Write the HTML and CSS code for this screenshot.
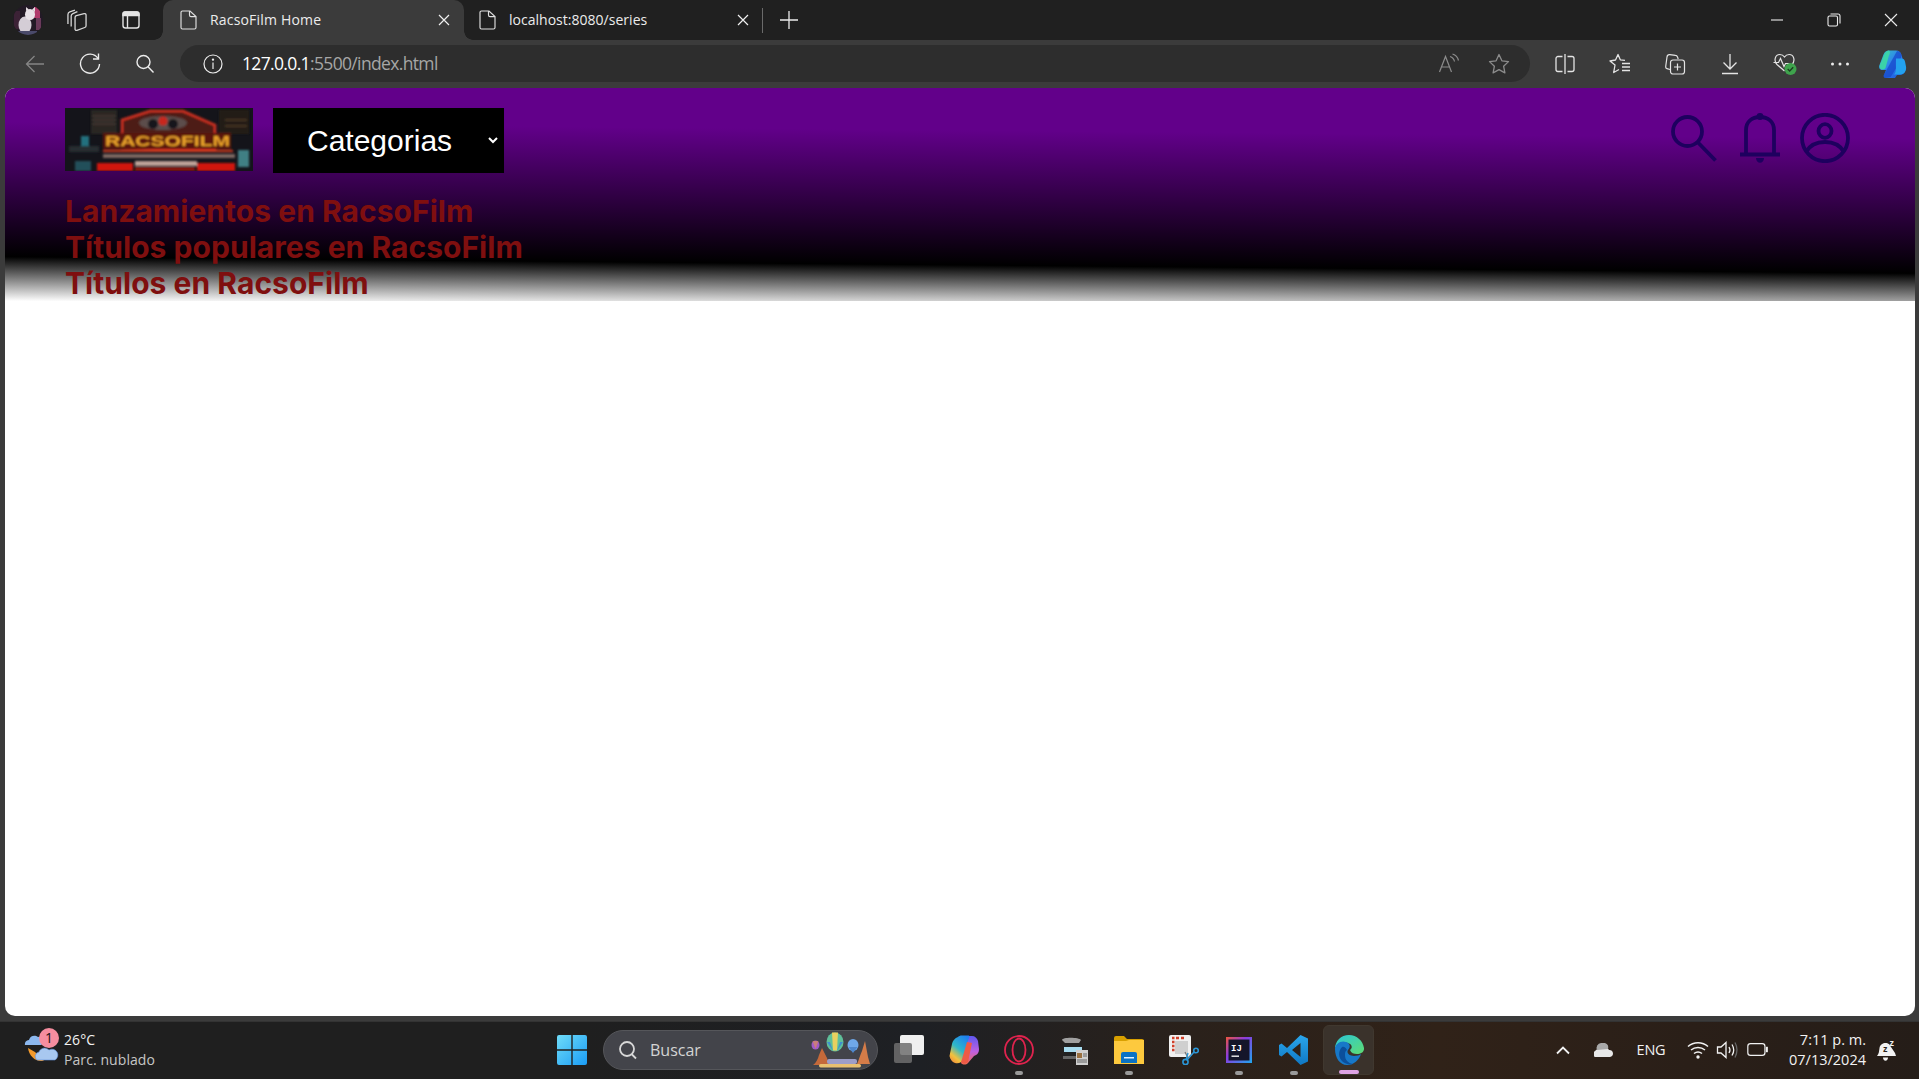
FILE: index.html
```html
<!DOCTYPE html>
<html lang="es">
<head>
<meta charset="utf-8">
<title>RacsoFilm Home</title>
<link rel="stylesheet" href="styles.css">
</head>
<body>
<svg class="defs" width="0" height="0" aria-hidden="true">
  <defs>
    <linearGradient id="gWin" x1="0" y1="0" x2="1" y2="1"><stop offset="0" stop-color="#6fdcf8"/><stop offset="1" stop-color="#1a9cf5"/></linearGradient>
    <linearGradient id="gCop" x1="0" y1="0" x2="1" y2="1"><stop offset="0" stop-color="#35c8c0"/><stop offset=".5" stop-color="#2d7df0"/><stop offset="1" stop-color="#1a4fd0"/></linearGradient>
    <linearGradient id="gCopL" x1=".8" y1="0" x2=".2" y2="1"><stop offset="0" stop-color="#1e7ff0"/><stop offset=".5" stop-color="#30b8c8"/><stop offset=".8" stop-color="#f2c23c"/><stop offset="1" stop-color="#f2903c"/></linearGradient>
    <linearGradient id="gCopR" x1="0" y1="0" x2="0" y2="1"><stop offset="0" stop-color="#5f58f0"/><stop offset=".55" stop-color="#c060e0"/><stop offset="1" stop-color="#f06a50"/></linearGradient>
    <linearGradient id="gEdge" x1="0" y1="0" x2="1" y2="1"><stop offset="0" stop-color="#2ac6d8"/><stop offset="1" stop-color="#5fdc72"/></linearGradient>
    <linearGradient id="gVs" x1="0" y1="0" x2="0" y2="1"><stop offset="0" stop-color="#2aa6ec"/><stop offset="1" stop-color="#0f78c4"/></linearGradient>
    <linearGradient id="gIj" x1="0" y1="0" x2="1" y2="1"><stop offset="0" stop-color="#f0563c"/><stop offset=".4" stop-color="#8a3ce0"/><stop offset="1" stop-color="#1ea8ee"/></linearGradient>
    <filter id="blurLogo" x="-5%" y="-5%" width="110%" height="110%"><feGaussianBlur stdDeviation="1.3"/></filter>
  </defs>
</svg>

<header class="tabstrip">
  <span class="strip-slot s56">
    <svg class="i30" viewBox="0 0 30 30"><defs><clipPath id="av"><circle cx="15" cy="15" r="15"/></clipPath></defs><g clip-path="url(#av)"><rect width="30" height="30" fill="#231a26"/><rect x="21" y="2" width="6" height="11" fill="#b03a6c"/><rect x="23" y="13" width="5" height="12" fill="#6a3a5a"/><rect x="1" y="6" width="6" height="18" fill="#3c2236"/><ellipse cx="12" cy="20" rx="6.500" ry="8.500" fill="#d4cdd6"/><ellipse cx="17" cy="9.500" rx="5" ry="5.500" fill="#e8e2e8"/><path d="M13 6l0-4 3 2.500zM19 4.500l3-2.500 0 5z" fill="#e6dde2"/><rect x="4" y="26" width="20" height="4" fill="#4a4a6a"/></g></svg>
  </span>
  <span class="strip-slot s42">
    <svg class="i22" viewBox="2.500 2 16 17" fill="none" stroke="#d6d6d6" stroke-width="1"><path d="M3.500 13.500V6.200c0-1 .5-1.600 1.400-1.900l4-1.400"/><path d="M6 15.500V7.500c0-1 .5-1.500 1.300-1.900l3.500-1.500"/><path d="M9 18V8.500c0-.7.400-1.100 1-1.300l6-1.600c.9-.2 1.500.3 1.500 1.100v8.200c0 .7-.4 1.200-1 1.400l-6 2.200c-.8.300-1.500-.2-1.500-1z"/></svg>
  </span>
  <span class="strip-slot s65">
    <svg class="i20" viewBox="0 0 20 20" fill="none" stroke="#e4e4e4" stroke-width="1.400"><rect x="2" y="2" width="16" height="16" rx="2.500"/><path d="M2 5.500h16V4a2 2 0 0 0-2-2H4a2 2 0 0 0-2 2z" fill="#e4e4e4"/><path d="M6.500 5.500V18"/></svg>
  </span>

  <div class="tab tab-active">
    <svg class="doc" viewBox="0 0 20 20" fill="none" stroke="#e0e0e0" stroke-width="1.150"><path d="M3 2.500C3 1.700 3.600 1 4.500 1h7.500L18 6.500v11c0 .8-.7 1.500-1.500 1.500h-12C3.600 19 3 18.300 3 17.500z"/><path d="M11.500 1v4c0 .9.700 1.600 1.500 1.600h5"/></svg>
    <span class="tab-label">RacsoFilm Home</span>
    <svg class="tab-x" viewBox="0 0 12 12" fill="none" stroke="#f0f0f0" stroke-width="1.200"><path d="M1 1l10 10M11 1L1 11"/></svg>
  </div>
  <div class="tab tab-idle">
    <svg class="doc" viewBox="0 0 20 20" fill="none" stroke="#e0e0e0" stroke-width="1.150"><path d="M3 2.500C3 1.700 3.600 1 4.500 1h7.500L18 6.500v11c0 .8-.7 1.500-1.500 1.500h-12C3.600 19 3 18.300 3 17.500z"/><path d="M11.500 1v4c0 .9.700 1.600 1.500 1.600h5"/></svg>
    <span class="tab-label">localhost:8080/series</span>
    <svg class="tab-x" viewBox="0 0 12 12" fill="none" stroke="#f0f0f0" stroke-width="1.200"><path d="M1 1l10 10M11 1L1 11"/></svg>
  </div>
  <span class="tab-divider"></span>
  <svg class="tab-plus" viewBox="0 0 18 18" fill="none" stroke="#ececec" stroke-width="1.300"><path d="M9 0v18M0 9h18"/></svg>

  <div class="winbtns">
    <span class="winbtn"><svg class="i14" viewBox="0 0 14 14" fill="none" stroke="#ececec" stroke-width="1.100"><path d="M1 7h12"/></svg></span>
    <span class="winbtn"><svg class="i14" viewBox="0 0 14 14" fill="none" stroke="#ececec" stroke-width="1.100"><rect x="1" y="3" width="9.500" height="10" rx="1.500"/><path d="M3.500 1H11a2 2 0 0 1 2 2v7.500"/></svg></span>
    <span class="winbtn"><svg class="i14" viewBox="0 0 14 14" fill="none" stroke="#ececec" stroke-width="1.100"><path d="M1 1l12 12M13 1L1 13"/></svg></span>
  </div>
</header>

<div class="toolbar">
  <span class="tool-slot">
    <svg class="i20" viewBox="0 0 20 20" fill="none" stroke="#858585" stroke-width="1.300"><path d="M19 10H1.500M9.500 2l-8 8 8 8"/></svg>
  </span>
  <span class="tool-slot">
    <svg class="i22" viewBox="0 0 22 22" fill="none" stroke="#ececec" stroke-width="1.400"><path d="M19 5.500A9.500 9.500 0 1 0 20.500 11"/><path d="M14 6h5.500V.5"/></svg>
  </span>
  <span class="tool-slot">
    <svg class="i20" viewBox="0 0 20 20" fill="none" stroke="#ececec" stroke-width="1.400"><circle cx="8.500" cy="8" r="6.500"/><path d="M13 12.700l5.500 5.800"/></svg>
  </span>
  <div class="address">
    <svg class="info" viewBox="0 0 20 20" fill="none" stroke="#ececec" stroke-width="1.200"><circle cx="10" cy="10" r="9"/><path d="M10 8.500V15"/><circle cx="10" cy="5.600" r=".6" fill="#ececec"/></svg>
    <span class="url"><span class="url-host">127.0.0.1</span><span class="url-rest">:5500/index.html</span></span>
    <div class="address-tools">
      <span class="addr-slot addr-read">
        <svg class="i22" viewBox="0 0 22 22" fill="none" stroke="#8c8c8c" stroke-width="1.200"><path d="M1.500 19L7.500 3.500 13.500 19M3.500 14h8"/><path d="M12 3.500c2.500.8 4 2.500 4.500 5M14.500 1c3.200 1 5.300 3.300 6 6.500"/></svg>
      </span>
      <span class="addr-slot">
        <svg class="i22" viewBox="0 0 22 22" fill="none" stroke="#8c8c8c" stroke-width="1.300" stroke-linejoin="round"><path d="M11 1.500l2.900 6.300 6.600.8-4.900 4.600 1.300 6.700L11 16.600l-5.900 3.300 1.300-6.700L1.500 8.600l6.600-.8z"/></svg>
      </span>
    </div>
  </div>
  <div class="toolbar-right">
    <span class="tool-slot">
      <svg class="i22" viewBox="0 0 22 22" fill="none" stroke="#e4e4e4" stroke-width="1.300"><path d="M8.500 3.500H4A2 2 0 0 0 2 5.500v11a2 2 0 0 0 2 2h4.500M13.500 3.500H18a2 2 0 0 1 2 2v11a2 2 0 0 1-2 2h-4.500M11 1v20"/></svg>
    </span>
    <span class="tool-slot">
      <svg class="i22" viewBox="0 0 22 22" fill="none" stroke="#e4e4e4" stroke-width="1.300" stroke-linejoin="round"><path d="M16 7.300L11.300 6.800 9 1.500 6.500 7 1 8l5 4-1.300 7.500L10 16.500"/><path d="M13 10.500h8M13 14h8M13 17.500h8"/></svg>
    </span>
    <span class="tool-slot">
      <svg class="i22" viewBox="0 0 22 22" fill="none" stroke="#e4e4e4" stroke-width="1.200"><path d="M6 16.500l-3-.8C2 15.300 1.500 14.500 1.700 13.500L3 4C3.200 2.500 4.300 1.500 5.800 1.700l5.700.7c1 .1 1.700.8 2 1.500L14.200 6"/><rect x="6.500" y="7" width="14" height="14" rx="2.500"/><path d="M13.500 10.500v7M10 14h7"/></svg>
    </span>
    <span class="tool-slot">
      <svg class="i22" viewBox="0 0 22 22" fill="none" stroke="#e4e4e4" stroke-width="1.300"><path d="M11 1v15M4.500 9.500l6.500 6.500 6.500-6.500M3 20.500h16"/></svg>
    </span>
    <span class="tool-slot">
      <svg class="i26" viewBox="0 0 26 26" fill="none" stroke="#e4e4e4" stroke-width="1.200"><path d="M12.500 20L5 13.500C1.500 10 3 3.500 7.800 3.500c2 0 3.700 1 4.700 2.500 1-1.500 2.700-2.500 4.700-2.500 4.800 0 6.300 6.500 2.800 10"/><path d="M1.500 11.500h5l2-4 3.500 8 1.500-3h4"/><circle cx="18.500" cy="18" r="6" fill="#3fa34d" stroke="none"/><path d="M15.700 18l2 2 3.500-3.700" stroke="#1c3c20" stroke-width="1.300"/></svg>
    </span>
    <span class="tool-slot">
      <svg class="i20" viewBox="0 0 20 20" fill="#ececec"><circle cx="2.500" cy="10" r="1.500"/><circle cx="10" cy="10" r="1.500"/><circle cx="17.500" cy="10" r="1.500"/></svg>
    </span>
    <span class="tool-slot tool-last">
      <svg class="i30" viewBox="0 0 30 30"><path d="M11 1.500h7c3 0 4.700 1.700 5.500 4.500L27 18c1.200 4-1 8-5 8h-3l-2 3H8c-2 0-2.500-1.500-2-3l2-5H4.500C2 21 .5 19 1.300 16.500l4.200-11C6.500 3 8.500 1.500 11 1.500z" fill="url(#gCop)"/><path d="M2 19C1 16 3 14 4.500 10 6 6 7.500 2 11 1.500c1.500 1 1 3-.2 5.500L7.500 19C6 21 3 21 2 19z" fill="#3bd2a8"/><path d="M19 2c2.500 0 4 2 4.700 4.500l-3 8.500-8 13-5 1c-2 0-2.800-1.500-2-3z" fill="#1646c8" opacity=".7"/><path d="M18 9.500h5.500c2 0 3 1 3.500 3l1 5c.7 4-1.500 8-5.500 8H16c3-3 1.500-7 2-16z" fill="#23a1ee"/></svg>
    </span>
  </div>
</div>

<main class="page">
  <section class="hero">
    <div class="hero-top">
      <svg class="logo" viewBox="0 0 188 63" role="img" aria-label="RacsoFilm">
        <rect width="188" height="63" fill="#14141a"/>
        <g filter="url(#blurLogo)">
          <rect x="26" y="2" width="26" height="24" fill="#2a2522"/>
          <path d="M28 8h22M28 12h22M28 16h22" stroke="#54493f" stroke-width="1"/>
          <rect x="154" y="2" width="30" height="24" fill="#221a18"/>
          <path d="M160 12h22M160 18h22" stroke="#66462c" stroke-width="1"/>
          <rect x="16" y="28" width="8" height="14" fill="#24707e"/>
          <rect x="10" y="53" width="16" height="10" fill="#24505a"/>
          <rect x="173" y="42" width="11" height="17" fill="#3f7f84"/>
          <rect x="4" y="38" width="30" height="6" fill="#262e30"/>
          <path d="M57 40V12L85 3h33l32 14v25z" fill="#4e1a16" stroke="#d03020" stroke-width="2.500"/>
          <ellipse cx="98" cy="15" rx="24" ry="7" fill="#5c4e4c"/>
          <circle cx="88" cy="16" r="5" fill="#16161c"/>
          <circle cx="108" cy="16" r="5" fill="#16161c"/>
          <circle cx="98" cy="13" r="4.500" fill="#c8261e"/>
          <rect x="38" y="25" width="128" height="16" fill="#5a150c"/>
          <text class="logo-text" x="40" y="38" textLength="125" lengthAdjust="spacingAndGlyphs">RACSOFILM</text>
          <rect x="38" y="42" width="130" height="2" fill="#d83c22"/>
          <rect x="38" y="46" width="132" height="4" fill="#7d6862"/>
          <rect x="70" y="53" width="62" height="5" fill="#bda298"/>
          <rect x="32" y="55" width="36" height="8" fill="#d0170e"/>
          <rect x="132" y="55" width="38" height="8" fill="#d0170e"/>
          <rect x="70" y="59" width="60" height="4" fill="#8a120b"/>
        </g>
      </svg>
      <select class="categories" aria-label="Categorias">
        <option>Categorias</option>
      </select>
      <div class="hero-icons">
        <svg class="hero-icon" viewBox="0 0 50 50" fill="none" stroke="#1e005f" stroke-width="3.800"><circle cx="17.500" cy="18.500" r="14.500"/><path d="M28 29.500l17.500 18"/></svg>
        <svg class="hero-icon" viewBox="0 0 50 50" fill="none" stroke="#1e005f" stroke-width="3.800"><path d="M11 41V17C11 8.500 17 4 25 4s14 4.500 14 13v24"/><path d="M5 41.500h40"/><circle cx="25" cy="3.500" r="3.400" fill="#1e005f" stroke="none"/><path d="M21 45h8c0 3-2 4.800-4 4.800S21 48 21 45z" fill="#1e005f" stroke="none"/></svg>
        <svg class="hero-icon" viewBox="0 0 50 50" fill="none" stroke="#1e005f" stroke-width="3.800"><ellipse cx="25" cy="25" rx="23" ry="23.200"/><ellipse cx="25" cy="18" rx="6.500" ry="6.800"/><path d="M6 39c4-7 11-10 19-10s15 3 19 10"/></svg>
      </div>
    </div>
    <h2 class="hero-title">Lanzamientos en RacsoFilm</h2>
    <h2 class="hero-title">Títulos populares en RacsoFilm</h2>
    <h2 class="hero-title">Títulos en RacsoFilm</h2>
  </section>
</main>

<footer class="taskbar">
  <div class="weather">
    <svg class="weather-icon" viewBox="0 0 36 36"><path d="M4 16c1 8 8 14 14 13 3-.5 4-3 4-6-3 1-9 0-11-3z" fill="#f2992b"/><path d="M1 13a4 4 0 0 1 4-5 5.500 5.500 0 0 1 9-3 4 4 0 0 1 3 8z" fill="#8cb8ee"/><path d="M13 28a4.500 4.500 0 0 1 2-8 6 6 0 0 1 10-2 5 5 0 0 1 6 10z" fill="#a8c8f0" stroke="#5f8fd6" stroke-width=".6"/></svg>
    <span class="badge">1</span>
    <div class="weather-text">
      <span class="temp">26°C</span>
      <span class="cond">Parc. nublado</span>
    </div>
  </div>
  <span class="task-slot">
    <svg class="i30" viewBox="0 0 30 30" fill="url(#gWin)"><path d="M0 2a2 2 0 0 1 2-2h12.300v14.300H0zM15.700 0H28a2 2 0 0 1 2 2v12.300H15.700zM0 15.700h14.300V30H2a2 2 0 0 1-2-2zM15.700 15.700H30V28a2 2 0 0 1-2 2H15.700z"/></svg>
  </span>
  <div class="search-pill">
    <svg class="pill-search" viewBox="0 0 20 20" fill="none" stroke="#d8d8d8" stroke-width="1.800"><circle cx="9" cy="9" r="7"/><path d="M13.500 14l4.500 4.500"/></svg>
    <span class="pill-text">Buscar</span>
    <svg class="pill-art" viewBox="0 0 60 36">
      <ellipse cx="4.500" cy="13" rx="4" ry="4.500" fill="#a25ac8"/><path d="M1.500 9h6l-3 8z" fill="#e2954a" opacity=".6"/>
      <ellipse cx="24" cy="10" rx="8.500" ry="9.500" fill="#5fbf9a"/><path d="M21 .5h6l-1 18h-4z" fill="#e8d060"/><path d="M16 10h3l3 9zM32 10h-3l-3 9z" fill="#3f8fd0"/>
      <ellipse cx="42" cy="13" rx="5.500" ry="6" fill="#6fa8e8"/><path d="M37.500 15l4.500 6 4.500-6z" fill="#4f88cc"/>
      <path d="M11 16l5 10 2 7H2c3-2 5-6 6-10z" fill="#c4693a"/><path d="M54 9l3 16 2 7H46c2-4 3-9 5-13z" fill="#d47c48"/>
      <rect x="16" y="27" width="30" height="5" rx="2" fill="#9d9ec8"/><rect x="8" y="32" width="42" height="3.500" rx="1.700" fill="#e8c070"/>
    </svg>
  </div>
  <div class="task-icons">
    <span class="task-slot">
      <svg class="i30" viewBox="0 0 30 30"><rect x="6" y="0" width="24" height="20" rx="2" fill="#f0f0f0"/><rect x="0" y="8" width="18" height="20" rx="2" fill="#6e6e6e" opacity=".85"/></svg>
    </span>
    <span class="task-slot">
      <svg class="i30" viewBox="0 0 30 30"><path d="M16 5l4-4h3c3 0 5 2 6 5l1 8c0 4-2 6-5 7l-6 7c-2 2-5 2-7 0z" fill="url(#gCopR)"/><path d="M9 2c1-1 2-1.500 4-1.500h6c2 0 1.500 2 .5 3.500L14 24c-1 4-5 5-8 4-3-1-5-4-5.500-7L3 9c.5-3 3-6 6-7z" fill="url(#gCopL)"/><path d="M13 24l5-17 5 1-4 19c-2 2-5 2-7 0z" fill="#ef5a45"/></svg>
    </span>
    <span class="task-slot">
      <svg class="i30" viewBox="0 0 30 30" fill="none" stroke="#e0234e" stroke-width="1.800"><circle cx="15" cy="15" r="14"/><ellipse cx="15" cy="15" rx="6.500" ry="11.500"/></svg>
      <i class="run-dot"></i>
    </span>
    <span class="task-slot">
      <svg class="i30" viewBox="0 0 30 30"><path d="M3 5c0-3 17-3 19 0l-2 3H6z" fill="#a0a0a0"/><rect x="4" y="8" width="18" height="14" fill="#222"/><rect x="5" y="12" width="18" height="5" fill="#a8dcf0"/><rect x="4" y="21" width="15" height="3" fill="#666"/><rect x="17" y="15" width="12" height="15" fill="#cfcfcf"/><rect x="18" y="18" width="5" height="5" fill="#9a7040"/><path d="M24 19h4M24 21h4M18 25h10M18 27h10" stroke="#666"/></svg>
    </span>
    <span class="task-slot">
      <svg class="i30" viewBox="0 0 30 30"><path d="M0 3a2 2 0 0 1 2-2h8l3 3h15a2 2 0 0 1 2 2v3H0z" fill="#d9a000"/><path d="M0 6h12l3-1h15v24H0z" fill="#fdc93e"/><path d="M7 28V19a2 2 0 0 1 2-2h12a2 2 0 0 1 2 2v9z" fill="#0a72c4"/><rect x="10" y="22" width="10" height="1.500" fill="#dff2ff"/></svg>
      <i class="run-dot"></i>
    </span>
    <span class="task-slot">
      <svg class="i30" viewBox="0 0 30 30"><rect x="0" y="0" width="22" height="22" rx="2" fill="#f0f0f0"/><path d="M3 3h2.500M3 7h2.500M3 11h2.500M3 15h2.500M7 3h3M12 3h3" stroke="#d0402a" stroke-width="2.500"/><rect x="6" y="6" width="13" height="13" fill="#cfcfcf"/><path d="M16 17l3 6 5-5" fill="none" stroke="#777" stroke-width="1.200"/><circle cx="27" cy="15.500" r="2.300" fill="none" stroke="#2a97d8" stroke-width="1.600"/><circle cx="16.500" cy="27" r="2.600" fill="none" stroke="#2a97d8" stroke-width="1.600"/><path d="M25 17l-7 8M17 25l2-7" stroke="#2a97d8" stroke-width="1.400"/></svg>
    </span>
    <span class="task-slot">
      <svg class="i26" viewBox="0 0 26 26"><rect width="26" height="26" fill="url(#gIj)"/><rect x="2.500" y="2.500" width="21" height="21" fill="#15162a"/><text class="ij-text" x="5" y="13.500">IJ</text><rect x="5.500" y="18.500" width="7.500" height="1.400" fill="#f0f0f0"/></svg>
      <i class="run-dot"></i>
    </span>
    <span class="task-slot">
      <svg class="i30" viewBox="0 0 30 30"><path d="M21.500 0L29 3.500v23L21.500 30 8 17l-5.500 4.500L0 20v-10l2.500-1.500L8 13zM21.500 8L13 15l8.500 7z" fill="url(#gVs)"/></svg>
      <i class="run-dot"></i>
    </span>
    <span class="task-slot task-active">
      <svg class="i30" viewBox="0 0 30 30"><path d="M1 14C1 6 7 0 15 0c8 0 14 6 15 13 .4 4-3 6-7 6-3 0-6-1-7-4 3-2 2-6-2-7C9 7 2 9 1 14z" fill="url(#gEdge)"/><path d="M1 14c0-5 6-9 11-7 4 1 5 5 2 8-2 3 2 6 6 6 3 0 6-1 7-2-2 6-7 11-14 11C6 30 1 23 1 14z" fill="#1778c8"/><path d="M8 12c-4 4-4 11 1 15 3 2 7 3 10 2-5-1-8-4-8-9 0-2 0-4 2-5-1-2-3-4-5-3z" fill="#0b4f9c"/></svg>
      <i class="run-bar"></i>
    </span>
  </div>
  <div class="tray">
    <span class="tray-slot t40"><svg class="i14" viewBox="0 0 14 14" fill="none" stroke="#f2f2f2" stroke-width="1.800"><path d="M1 10.500l6-6 6 6"/></svg></span>
    <span class="tray-slot t40 cloud-slot"><svg class="cloud" viewBox="0 0 20 14" fill="#e8e8e8"><path d="M1 14a3.500 3.500 0 0 1 0-6 5 5 0 0 1 5-2 5 5 0 0 1 9 1 3.500 3.500 0 0 1 4 3.500 3.500 3.500 0 0 1-3 3.500z"/><path d="M3 7a5 5 0 0 1 4-7h4a5 5 0 0 1 3 6z" fill="#a8a8a8"/></svg></span>
    <span class="tray-slot t56 tray-lang">ENG</span>
    <span class="tray-slot t32"><svg class="i22" viewBox="0 0 22 22" fill="none" stroke="#f2f2f2" stroke-width="1.500"><path d="M1 7.500c5.500-5 14.500-5 20 0M4 11c4-3.500 10-3.500 14 0M7 14.500c2.500-2 5.500-2 8 0"/><circle cx="11" cy="18" r="1.700" fill="#f2f2f2" stroke="none"/></svg></span>
    <span class="tray-slot t26"><svg class="i22" viewBox="0 0 22 22" fill="none" stroke="#f2f2f2" stroke-width="1.300"><path d="M1.500 8v6H5l5 4.500v-15L5 8z"/><path d="M13 8c1.300 2 1.300 4 0 6M16 5.500c2.200 3.500 2.200 7.500 0 11"/><path d="M19 3.500c2.500 4.500 2.500 10 0 15" stroke="#666"/></svg></span>
    <span class="tray-slot t28"><svg class="battery" viewBox="0 0 20 12" fill="none" stroke="#f2f2f2" stroke-width="1.100"><rect x=".6" y=".6" width="15.800" height="10.800" rx="2.500"/><rect x="17.300" y="3.500" width="1.800" height="5" fill="#f2f2f2" stroke="none"/></svg></span>
    <div class="clock"><span>7:11 p. m.</span><span>07/13/2024</span></div>
    <span class="tray-slot t28 bell"><svg class="i22" viewBox="0 0 22 22"><path d="M2 17c2-2 2-5 2.500-8C5 5.500 8 4 10.500 4c1.500 0 2.500.5 3.500 1l6 9 1 3z" fill="#f2f2f2"/><path d="M8 18.500h5c0 2-1 3.200-2.500 3.200S8 20.500 8 18.500z" fill="#f2f2f2"/><text class="zz" x="8" y="13">z</text><text class="zz2" x="14.500" y="7">z</text></svg></span>
  </div>
</footer>
</body>
</html>
```

FILE: styles.css
```css
* { box-sizing: border-box; }
html, body { height: 100%; }
body {
  margin: 0;
  width: 1919px;
  height: 1079px;
  overflow: hidden;
  display: flex;
  flex-direction: column;
  background: #3b3b3b;
  color: #fff;
  font-family: "Open Sans", "Noto Sans", sans-serif;
}
svg { display: block; flex: none; }
.defs { position: absolute; }
.i14 { width: 14px; height: 14px; }
.i20 { width: 20px; height: 20px; }
.i22 { width: 22px; height: 22px; }
.i26 { width: 26px; height: 26px; }
.i30 { width: 30px; height: 30px; }

/* tab strip */
.tabstrip {
  flex: none;
  height: 40px;
  display: flex;
  align-items: center;
  background: #202020;
}
.strip-slot { display: flex; align-items: center; justify-content: center; height: 40px; flex: none; }
.s56 { width: 56px; }
.s42 { width: 42px; }
.s65 { width: 65px; }
.tab {
  position: relative;
  flex: none;
  height: 40px;
  display: flex;
  align-items: center;
}
.tab-active {
  width: 301px;
  padding: 0 14px 0 15px;
  background: #3b3b3b;
  border-radius: 10px 10px 0 0;
}
.tab-active::before,
.tab-active::after {
  content: "";
  position: absolute;
  bottom: 0;
  width: 9px;
  height: 9px;
}
.tab-active::before { left: -9px; background: radial-gradient(circle at 0 0, #202020 8.500px, #3b3b3b 9px); }
.tab-active::after { right: -9px; background: radial-gradient(circle at 100% 0, #202020 8.500px, #3b3b3b 9px); }
.tab-idle { width: 291px; padding: 0 6px 0 13px; }
.doc { width: 20px; height: 20px; margin-right: 12px; }
.tab-label {
  flex: 1;
  margin-top: -2px;
  font-size: 14px;
  letter-spacing: 0.02px;
  color: #ececec;
  white-space: nowrap;
}
.tab-active .tab-label { letter-spacing: 0.18px; }
.tab-x { width: 12px; height: 12px; }
.tab-divider { width: 1px; height: 25px; background: #6a6a6a; margin-left: 7px; flex: none; }
.tab-plus { width: 18px; height: 18px; margin-left: 17px; }
.winbtns { margin-left: auto; display: flex; }
.winbtn { width: 57px; height: 40px; display: flex; align-items: center; justify-content: center; }

/* toolbar */
.toolbar {
  flex: none;
  height: 48px;
  display: flex;
  align-items: center;
  padding-left: 7px;
  background: #3b3b3b;
}
.tool-slot { width: 55px; height: 40px; flex: none; display: flex; align-items: center; justify-content: center; }
.tool-last { width: 51px; padding-left: 1px; }
.address {
  flex: none;
  width: 1350px;
  height: 37px;
  margin-left: 8px;
  margin-top: -1px;
  padding-left: 23px;
  display: flex;
  align-items: center;
  background: #2d2d2d;
  border-radius: 18.500px;
}
.info { width: 20px; height: 20px; margin-right: 19px; }
.url { margin-top: -2px; font-size: 17.500px; letter-spacing: -0.65px; white-space: nowrap; }
.url-host { color: #fff; }
.url-rest { color: #a6a6a6; }
.address-tools { margin-left: auto; display: flex; padding-right: 6px; }
.addr-slot { width: 51px; height: 37px; display: flex; align-items: center; justify-content: center; }
.addr-read { padding-left: 2px; }
.toolbar-right { flex: none; margin-left: 7px; display: flex; }

/* page */
.page {
  flex: none;
  width: 1910px;
  height: 928px;
  margin-left: 5px;
  background: #fff;
  border-radius: 10px;
  overflow: hidden;
}
.hero {
  padding: 20px 65px 0 60px;
  background: linear-gradient(180.5deg, #62008a 22%, #000 80.7%, #fff 100%);
}
.hero-top { display: flex; align-items: flex-start; gap: 20px; margin-bottom: 20px; height: 65px; }
.logo { width: 188px; height: 63px; }
.logo-text {
  font: 700 14px "Liberation Sans", sans-serif;
  fill: #eda62c;
}
.categories {
  width: 231px;
  height: 65px;
  padding: 0 0 0 30px;
  border: 0;
  border-right: 3px solid #000;
  border-radius: 0;
  background-color: #000;
  color: #fff;
  font: 30px "Liberation Sans", Arial, sans-serif;
}
.hero-icons { margin-left: auto; display: flex; gap: 15px; margin-top: 5px; }
.hero-icon { width: 50px; height: 50px; }
.hero-title {
  margin: 0;
  font: 700 30px/36px Inter, sans-serif;
  letter-spacing: 0.04px;
  color: #7f0f0f;
}

/* taskbar */
.taskbar {
  flex: none;
  margin-top: 5px;
  height: 58px;
  padding-bottom: 2px;
  display: flex;
  align-items: center;
  background: linear-gradient(90deg, #1f1f1f 0%, #1f1f1f 30%, #1e2024 48%, #2a211b 62%, #302218 75%, #2a1f18 88%, #251d18 100%);
  border-top: 1px solid #333;
}
.weather {
  position: relative;
  flex: none;
  width: 544px;
  padding-left: 24px;
  display: flex;
  align-items: center;
}
.weather-icon { width: 36px; height: 36px; margin-right: 4px; }
.badge {
  position: absolute;
  left: 39px;
  top: -2px;
  width: 20px;
  height: 20px;
  border-radius: 50%;
  background: #f58d9f;
  color: #201015;
  font-size: 14px;
  line-height: 20px;
  text-align: center;
}
.weather-text { display: flex; flex-direction: column; font-size: 14px; line-height: 20px; letter-spacing: 0.08px; }
.temp { color: #f2f2f2; }
.cond { color: #c6c6c6; }
.task-slot {
  position: relative;
  flex: none;
  width: 55px;
  height: 50px;
  display: flex;
  align-items: center;
  justify-content: center;
}
.task-active { background: #3a322b; border-radius: 6px; border: 1px solid #40382f; width: 51px; margin: 0 2px; }
.run-dot {
  position: absolute;
  left: 50%;
  bottom: 0;
  width: 8px;
  height: 4px;
  margin-left: -4px;
  border-radius: 2px;
  background: #9a9a9a;
}
.run-bar {
  position: absolute;
  left: 50%;
  bottom: 0;
  width: 20px;
  height: 4px;
  margin-left: -10px;
  border-radius: 2px;
  background: #dfa3e4;
}
.search-pill {
  flex: none;
  width: 275px;
  height: 40px;
  margin: 0 3px 0 4px;
  padding: 0 6px 0 14px;
  display: flex;
  align-items: center;
  background: #43444a;
  border: 1px solid #55565a;
  border-radius: 20px;
}
.pill-search { width: 20px; height: 20px; margin-right: 12px; }
.pill-text { font-size: 16px; color: #d4d4d4; flex: 1; }
.pill-art { width: 60px; height: 36px; }
.task-icons { flex: none; display: flex; align-items: center; }
.tray { margin-left: auto; display: flex; align-items: center; padding-right: 19px; }
.tray-slot { flex: none; height: 40px; display: flex; align-items: center; justify-content: center; }
.t40 { width: 40px; }
.cloud-slot { padding-left: 2px; }
.t56 { width: 56px; }
.t32 { width: 32px; margin-left: 3px; }
.t26 { width: 26px; }
.t28 { width: 28px; margin-left: 4px; }
.tray-lang { font-size: 14.500px; letter-spacing: -0.2px; color: #f2f2f2; }
.cloud { width: 20px; height: 14px; }
.battery { width: 22px; height: 13px; }
.clock {
  flex: none;
  width: 94px;
  display: flex;
  flex-direction: column;
  align-items: flex-end;
  font-size: 14.500px;
  line-height: 20px;
  color: #f2f2f2;
}
.bell { margin-left: 6px; }
.zz, .zz2 { font: 700 9px "Liberation Sans", sans-serif; fill: #2a1f18; }
.zz2 { fill: #f2f2f2; }
.ij-text { font: 700 9px "Liberation Mono", monospace; fill: #fff; }
```
